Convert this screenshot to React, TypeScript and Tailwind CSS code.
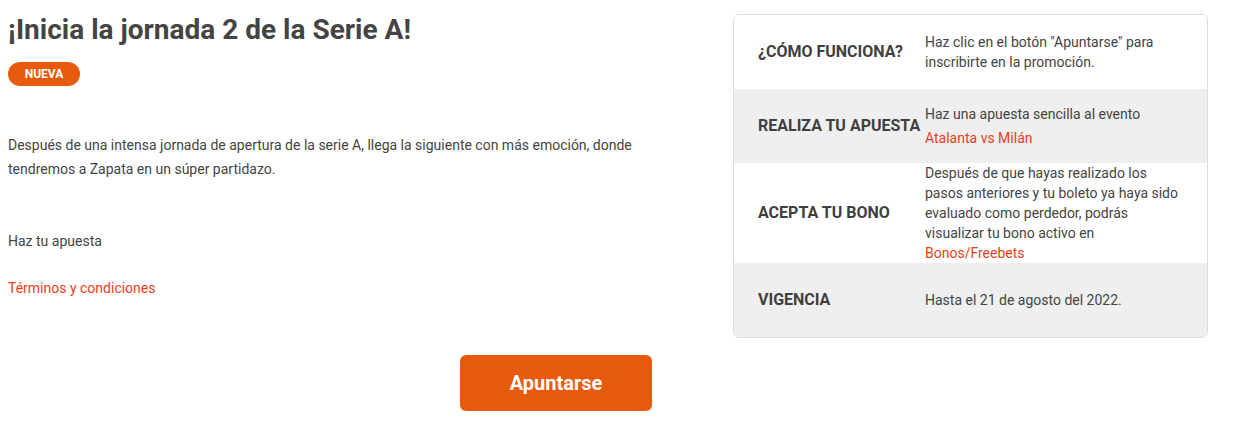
import React from "react";

const rows = [
  {
    label: "¿CÓMO FUNCIONA?",
    gray: false,
    content: (
      <p className="leading-5">Haz clic en el botón "Apuntarse" para inscribirte en la promoción.</p>
    ),
  },
  {
    label: "REALIZA TU APUESTA",
    gray: true,
    content: (
      <div className="leading-6">
        <p>Haz una apuesta sencilla al evento</p>
        <a className="text-[#e8401c]">Atalanta vs Milán</a>
      </div>
    ),
  },
  {
    label: "ACEPTA TU BONO",
    gray: false,
    content: (
      <p className="leading-5">
        Después de que hayas realizado los pasos anteriores y tu boleto ya haya sido evaluado como perdedor, podrás
        visualizar tu bono activo en <br />
        <a className="text-[#e8401c]">Bonos/Freebets</a>
      </p>
    ),
  },
  {
    label: "VIGENCIA",
    gray: true,
    content: <p className="leading-5">Hasta el 21 de agosto del 2022.</p>,
  },
];

export default function App() {
  return (
    <div className="w-[1235px] h-[423px] bg-white text-[#444] overflow-hidden" style={{ fontFamily: "Roboto, 'Noto Sans', sans-serif" }}>
      <div className="flex">
        <div className="flex-1 pl-2">
          <h1 className="text-[28px] font-bold leading-[34px] mt-[13px] text-[#444]">¡Inicia la jornada 2 de la Serie A!</h1>
          <span className="inline-flex items-center justify-center mt-[15px] h-6 w-[72px] rounded-full bg-[#e85a0e] text-white text-[12px] font-bold">NUEVA</span>
          <p className="mt-[47px] w-[670px] text-[14px] leading-6 text-[#444]">
            Después de una intensa jornada de apertura de la serie A, llega la siguiente con más emoción, donde tendremos a Zapata en un súper partidazo.
          </p>
          <p className="mt-12 text-[14px] leading-6">Haz tu apuesta</p>
          <p className="mt-[23px] text-[14px] leading-6">
            <a className="text-[#e8401c]">Términos y condiciones</a>
          </p>
        </div>
        <div className="w-[475px] mt-[14px] mr-[27px] border border-[#dcdcdc] rounded-md overflow-hidden">
          {rows.map((r) => (
            <div key={r.label} className={`flex items-center min-h-[74px] ${r.gray ? "bg-[#efefef]" : "bg-white"}`}>
              <div className="w-[191px] pl-6 shrink-0 text-[16px] font-bold text-[#3f3f3f] whitespace-nowrap">{r.label}</div>
              <div className="flex-1 pr-6 text-[14px] text-[#444]">{r.content}</div>
            </div>
          ))}
        </div>
      </div>
      <div className="w-[1112px] flex justify-center mt-[17px]">
        <button className="w-[192px] h-14 rounded-md bg-[#e85a0e] text-white text-[20px] font-bold">Apuntarse</button>
      </div>
    </div>
  );
}
